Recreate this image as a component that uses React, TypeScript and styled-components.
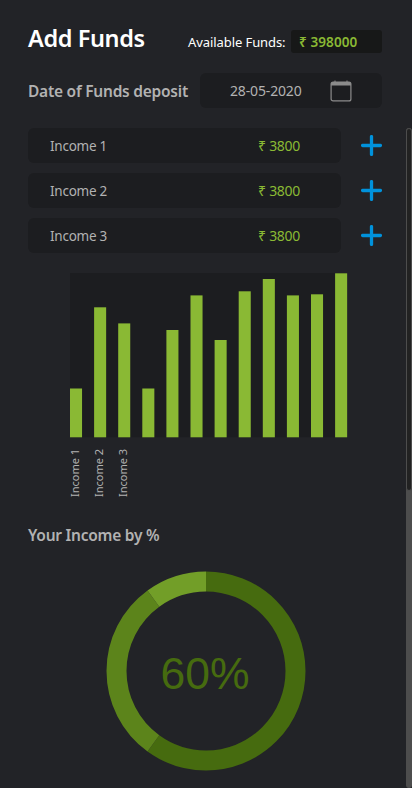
import React from 'react';
import styled, { createGlobalStyle } from 'styled-components';

const GlobalStyle = createGlobalStyle`
  * { box-sizing: border-box; }
  html, body { margin: 0; background: #222327; overflow: hidden; }
  body { font-family: 'Noto Sans', 'Open Sans', sans-serif; color: #b2b2b2; }
`;

const Page = styled.main`
  width: 412px;
  height: 788px;
  background: #222327;
  padding: 26px 0 0 28px;
  display: flex;
  flex-direction: column;
`;

const Header = styled.header`
  display: flex;
  align-items: flex-start;
  width: 354px;
  height: 47px;
`;

const Title = styled.h1`
  margin: -5px 0 0;
  width: 160px;
  font-size: 23.5px;
  line-height: 34px;
  font-weight: 600;
  letter-spacing: -0.4px;
  color: #fff;
  white-space: nowrap;
`;

const FundsLabel = styled.span`
  margin-top: 6px;
  width: 103px;
  font-size: 13px;
  line-height: 20px;
  letter-spacing: -0.08px;
  color: #fff;
  white-space: nowrap;
`;

const FundsValue = styled.span`
  margin-top: 4px;
  width: 91px;
  height: 23px;
  padding-left: 8px;
  border-radius: 3px;
  background: #171818;
  color: #8ab934;
  font-size: 13.5px;
  font-weight: 600;
  line-height: 24px;
  letter-spacing: 0.1px;
  white-space: nowrap;
`;

const DateRow = styled.div`
  display: flex;
  align-items: center;
  width: 354px;
  height: 35px;
`;

const SubTitle = styled.h2`
  margin: 0;
  font-size: 15.5px;
  line-height: 22px;
  font-weight: 600;
  letter-spacing: -0.24px;
  white-space: nowrap;
`;

const DateField = styled.div`
  display: flex;
  align-items: center;
  justify-content: space-between;
  margin-left: auto;
  width: 182px;
  height: 35px;
  padding: 0 30px;
  border-radius: 6px;
  background: #1c1d20;
  font-size: 14px;
  letter-spacing: -0.15px;
`;

const ScrollArea = styled.section`
  display: flex;
  justify-content: space-between;
  margin-top: 20px;
  height: 660px;
`;

const Content = styled.div`
  width: 354px;
`;

const Track = styled.div`
  width: 6px;
  height: 660px;
  background: #4d4d4d;
  border-radius: 3px;
`;

const Thumb = styled.div`
  height: 363px;
  border: 1px solid #4d4d4d;
  border-radius: 3px;
  background: #222222;
`;

const IncomeList = styled.div`
  display: flex;
  flex-direction: column;
  gap: 10px;
`;

const IncomeRow = styled.div`
  display: flex;
  align-items: center;
  justify-content: space-between;
`;

const IncomeField = styled.div`
  display: flex;
  align-items: center;
  justify-content: space-between;
  width: 313px;
  height: 35px;
  padding: 0 41px 0 22px;
  border-radius: 6px;
  background: #1c1d20;
`;

const IncomeName = styled.span`
  font-size: 13.5px;
  letter-spacing: -0.25px;
`;

const Amount = styled.span`
  color: #8ab934;
  font-size: 14px;
  letter-spacing: -0.3px;
`;

const AddButton = styled.button`
  display: flex;
  width: 21px;
  height: 21px;
  padding: 0;
  border: 0;
  background: none;
`;

const ChartWrap = styled.figure`
  margin: 20px 0 0 42px;
  width: 278px;
  height: 165px;
`;

const Labels = styled.div`
  display: flex;
  gap: 8px;
  margin: 9px 0 0 39px;
  height: 50px;
`;

const BarLabel = styled.span`
  width: 16px;
  height: 50px;
  writing-mode: vertical-rl;
  transform: rotate(180deg);
  font-size: 11px;
  line-height: 16px;
  white-space: nowrap;
`;

const ShareHeading = styled.div`
  margin: 27px 0 25px;
`;

const DonutWrap = styled.div`
  margin-left: 78px;
  width: 200px;
  height: 200px;
`;

const Svg = styled.svg`
  display: block;
`;

const incomes = ['Income 1', 'Income 2', 'Income 3'];
const barTops = [115.5, 34.3, 50.4, 115.5, 57, 22.4, 67, 18.3, 6, 22.4, 21.3, 0.3];
const shares = [
  { color: '#466b0f', size: 60, offset: 0 },
  { color: '#5c841b', size: 30, offset: 60 },
  { color: '#729e28', size: 10, offset: 90 },
];

const CalendarIcon = () => (
  <Svg width="22" height="22" viewBox="0 0 22 22">
    <rect x="1.1" y="2.1" width="19.8" height="18.8" rx="2" fill="none" stroke="#8b8b8b" strokeWidth="1.2" />
    <path d="M1 3.5A1.5 1.5 0 0 1 2.5 2h17A1.5 1.5 0 0 1 21 3.5V5.5H1Z M4.5 .5h1v2h-1Z M16.5 .5h1v2h-1Z" fill="#8b8b8b" />
  </Svg>
);

const PlusIcon = () => (
  <Svg width="21" height="21" viewBox="0 0 21 21">
    <path d="M10.5 1.6V19.4M1.6 10.5H19.4" stroke="#0092dc" strokeWidth="3.3" strokeLinecap="round" />
  </Svg>
);

const BarChart = () => (
  <Svg width="278" height="165" viewBox="0 0 278 165">
    <rect width="277" height="164.2" fill="#1c1d20" />
    {barTops.map((top, i) => (
      <rect key={i} x={i * 24.1} y={top} width="12.05" height={164.3 - top} fill="#8ab934" />
    ))}
  </Svg>
);

const Donut = () => (
  <Svg width="200" height="200" viewBox="0 0 200 200">
    <g transform="rotate(-90 100 100)" fill="none" strokeWidth="20">
      {shares.map((s) => (
        <circle
          key={s.color}
          cx="100"
          cy="100"
          r="89.5"
          stroke={s.color}
          pathLength="100"
          strokeDasharray={`${s.size} ${100 - s.size}`}
          strokeDashoffset={-s.offset}
        />
      ))}
    </g>
    <text x="99" y="118" textAnchor="middle" fontFamily="Liberation Sans, sans-serif" fontSize="44.5" fill="#466b0f">
      60%
    </text>
  </Svg>
);

export default function App() {
  return (
    <>
      <GlobalStyle />
      <Page>
        <Header>
          <Title>Add Funds</Title>
          <FundsLabel>Available Funds:</FundsLabel>
          <FundsValue>₹ 398000</FundsValue>
        </Header>
        <DateRow>
          <SubTitle>Date of Funds deposit</SubTitle>
          <DateField>
            <span>28-05-2020</span>
            <CalendarIcon />
          </DateField>
        </DateRow>
        <ScrollArea>
          <Content>
            <IncomeList>
              {incomes.map((name) => (
                <IncomeRow key={name}>
                  <IncomeField>
                    <IncomeName>{name}</IncomeName>
                    <Amount>₹ 3800</Amount>
                  </IncomeField>
                  <AddButton aria-label={`Add to ${name}`}>
                    <PlusIcon />
                  </AddButton>
                </IncomeRow>
              ))}
            </IncomeList>
            <ChartWrap>
              <BarChart />
            </ChartWrap>
            <Labels>
              {incomes.map((name) => (
                <BarLabel key={name}>{name}</BarLabel>
              ))}
            </Labels>
            <ShareHeading>
              <SubTitle>Your Income by %</SubTitle>
            </ShareHeading>
            <DonutWrap>
              <Donut />
            </DonutWrap>
          </Content>
          <Track>
            <Thumb />
          </Track>
        </ScrollArea>
      </Page>
    </>
  );
}
